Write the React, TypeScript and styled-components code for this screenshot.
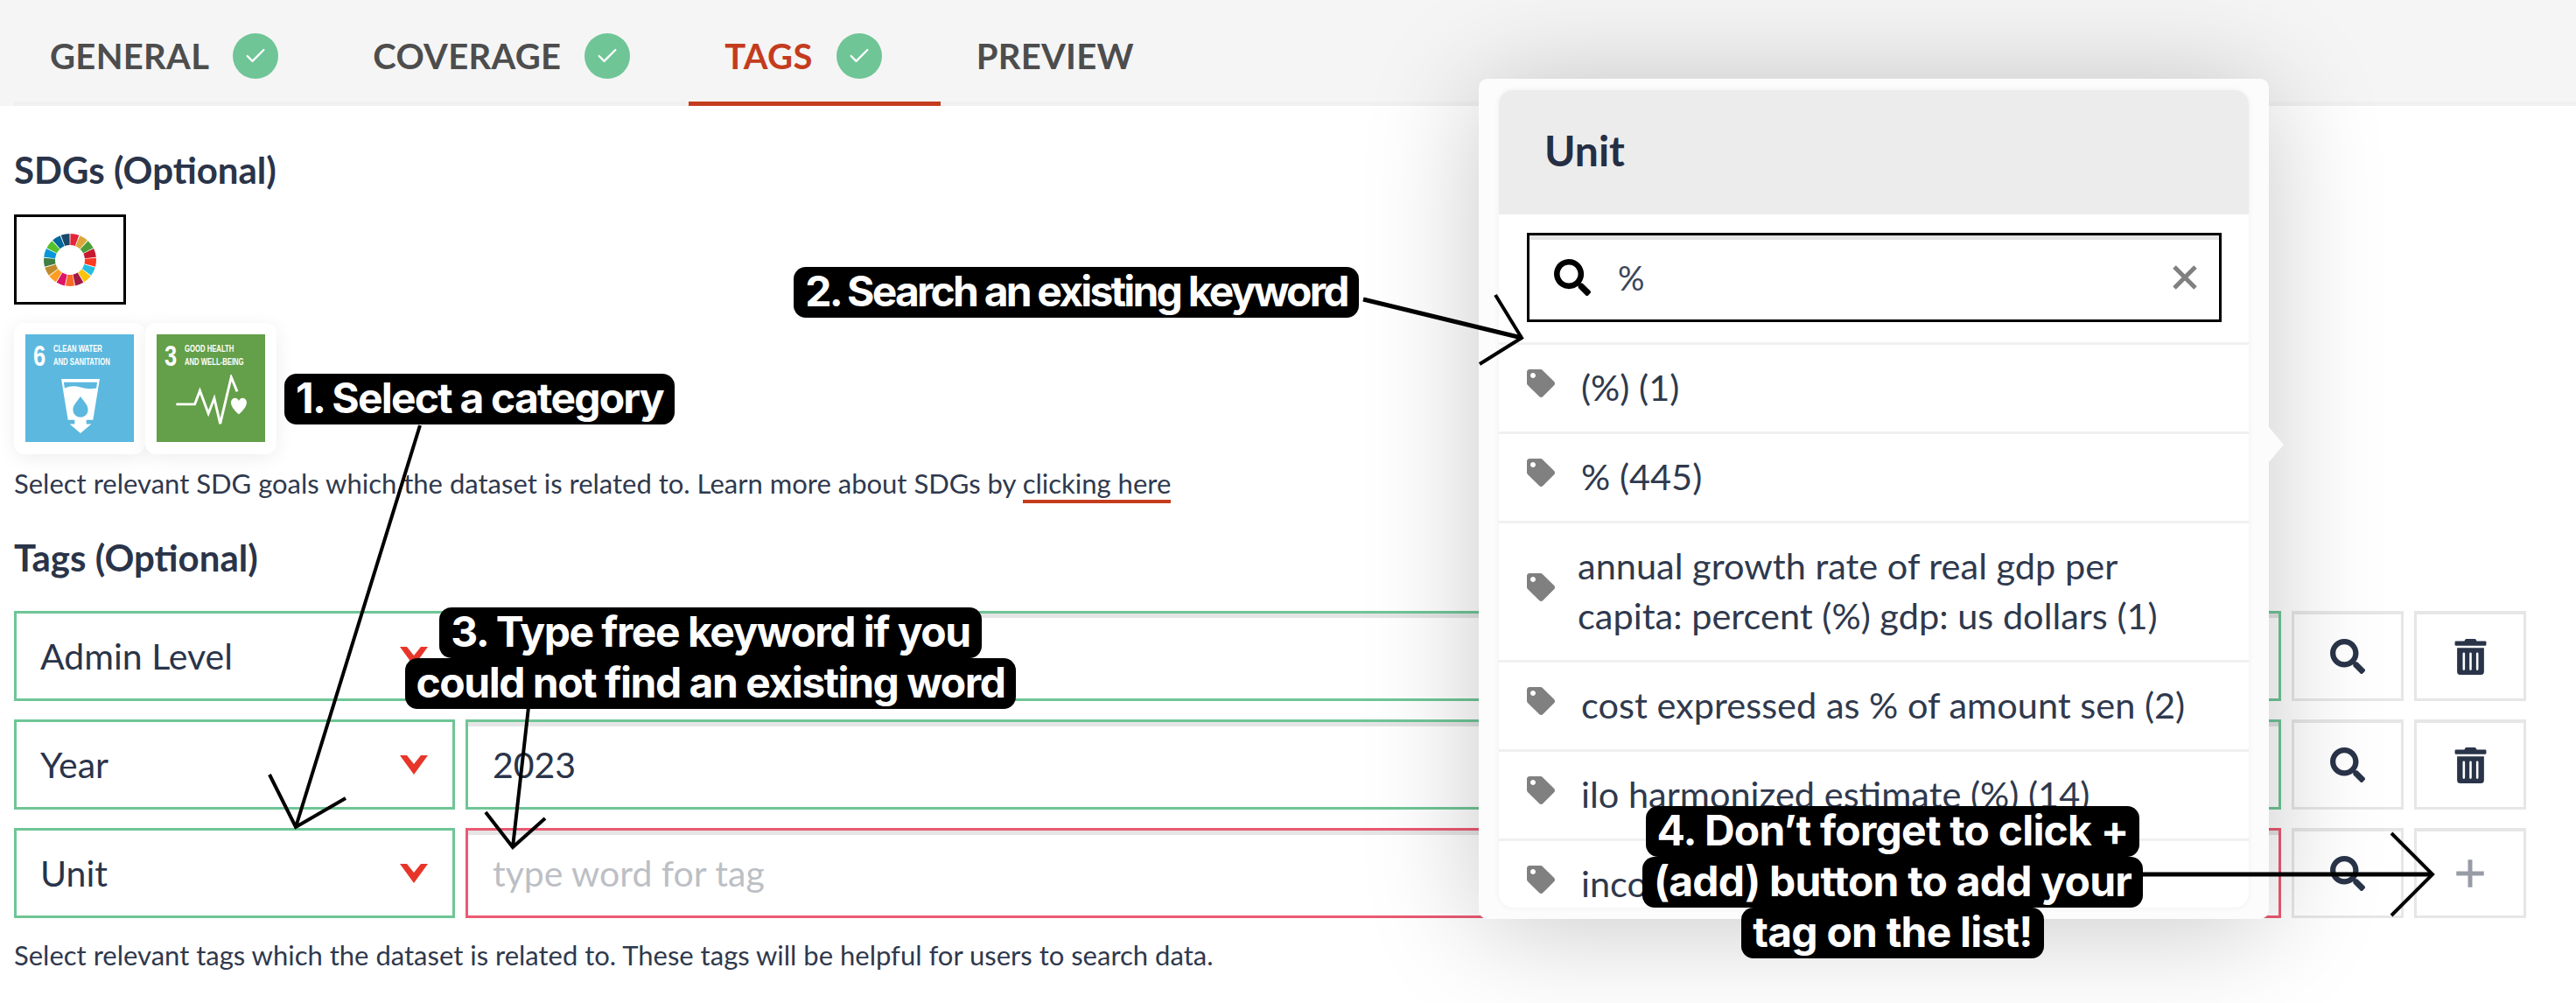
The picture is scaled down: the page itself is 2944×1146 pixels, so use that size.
import styled, { createGlobalStyle } from "styled-components";
import { Fragment } from "react";
import { FaSearch, FaTag, FaTrashAlt } from "react-icons/fa";
import { Check, Plus } from "lucide-react";

const GlobalStyle = createGlobalStyle`
  html, body {
    margin: 0;
    padding: 0;
    background: #fff;
  }
  * {
    box-sizing: border-box;
  }
`;

const Page = styled.div`
  position: relative;
  width: 2944px;
  height: 1146px;
  overflow: hidden;
  background: #fff;
  font-family: Lato, "Noto Sans", sans-serif;
  color: #2a3449;
`;

const TabBar = styled.div`
  height: 121px;
  padding-left: 16px;
  background: #f5f5f5;
  display: flex;
  align-items: flex-end;
`;

const TabList = styled.div`
  flex: 1;
  display: flex;
  border-bottom: 5px solid #f0f0f0;
  height: 121px;
`;

const Tab = styled.div<{ $active?: boolean }>`
  display: flex;
  align-items: center;
  height: 121px;
  padding: 12px 67px 0 41px;
  gap: 27px;
  margin-bottom: -5px;
  border-bottom: 5px solid ${(p) => (p.$active ? "#c43c1e" : "transparent")};
  color: ${(p) => (p.$active ? "#c43c1e" : "#4d4d4d")};
  font-size: 40px;
  font-weight: 700;
  letter-spacing: 0.3px;
`;

const CheckBadge = styled.span`
  width: 52px;
  height: 52px;
  border-radius: 50%;
  background: #6fc596;
  color: #fff;
  display: flex;
  align-items: center;
  justify-content: center;
`;

const Content = styled.div`
  padding-left: 16px;
`;

const SectionTitle = styled.h2<{ $top: number }>`
  margin: ${(p) => p.$top}px 0 0;
  font-size: 42px;
  line-height: 48px;
  font-weight: 700;
  color: #2a3449;
`;

const WheelBox = styled.div`
  margin-top: 27px;
  width: 128px;
  height: 103px;
  border: 3px solid #000;
  display: flex;
  align-items: center;
  justify-content: center;
`;

const GoalRow = styled.div`
  margin-top: 21px;
  display: flex;
`;

const GoalCard = styled.div`
  width: 150px;
  height: 150px;
  padding: 13px;
  border-radius: 12px;
  background: #fff;
  box-shadow: 0 4px 22px rgba(0, 0, 0, 0.07);
`;

const GoalTile = styled.div<{ $bg: string }>`
  width: 124px;
  height: 123px;
  padding: 9px 0 0 9px;
  background: ${(p) => p.$bg};
  color: #fff;
`;

const GoalHead = styled.div`
  display: flex;
  gap: 9px;
  height: 30px;
`;

const GoalNumber = styled.span`
  width: 14px;
  font: 700 34px/30px "Liberation Sans", sans-serif;
  transform: scaleX(0.75);
  transform-origin: left center;
`;

const GoalName = styled.span`
  font: 700 11px/15px "Liberation Sans", sans-serif;
  white-space: pre;
  transform: scaleX(0.7);
  transform-origin: left center;
`;

const GoalIcon = styled.svg<{ $top: number }>`
  display: block;
  margin: ${(p) => p.$top}px auto 0;
  position: relative;
  left: -4px;
`;

const Help = styled.p<{ $top: number }>`
  margin: ${(p) => p.$top}px 0 0;
  font-size: 31px;
  line-height: 40px;
  color: #2f394d;
`;

const HelpLink = styled.span`
  border-bottom: 4px solid #c43c1e;
`;

const TagGrid = styled.div`
  margin-top: 37px;
  width: 2871px;
  display: grid;
  grid-template-columns: 504px 2075px 128px 128px;
  grid-auto-rows: 103px;
  column-gap: 12px;
  row-gap: 21px;
`;

const SelectBox = styled.div`
  display: flex;
  align-items: center;
  justify-content: space-between;
  padding: 0 27px 0 27px;
  border: 3px solid #6fc596;
  font-size: 41px;
`;

const TagInput = styled.div<{ $invalid?: boolean; $placeholder?: boolean }>`
  display: flex;
  align-items: center;
  padding-left: 28px;
  border: 3px solid ${(p) => (p.$invalid ? "#ea5a72" : "#6fc596")};
  box-shadow: inset 0 5px 0 #e5e5e5;
  font-size: 41px;
  color: ${(p) => (p.$placeholder ? "#bcbfc5" : "#2a3449")};
`;

const IconButton = styled.div<{ $muted?: boolean }>`
  display: flex;
  align-items: center;
  justify-content: center;
  border: 3px solid #e6e6e6;
  border-top-width: 4px;
  background: #fff;
  color: ${(p) => (p.$muted ? "#979ba5" : "#2a3449")};
`;

const Popover = styled.div`
  position: absolute;
  left: 1690px;
  top: 90px;
  width: 903px;
  height: 960px;
  padding: 13px 23px;
  border-radius: 10px;
  background: #fcfcfc;
  box-shadow: 0 10px 130px rgba(0, 0, 0, 0.22);

  &::after {
    content: "";
    position: absolute;
    right: -17px;
    top: 398px;
    border-style: solid;
    border-width: 20px 0 20px 17px;
    border-color: transparent transparent transparent #fcfcfc;
  }
`;

const PopoverBody = styled.div`
  height: 934px;
  border-radius: 16px;
  overflow: hidden;
  background: #fff;
  box-shadow: 0 0 6px rgba(0, 0, 0, 0.06);
`;

const PopoverHead = styled.div`
  height: 142px;
  padding: 0 0 6px 52px;
  display: flex;
  align-items: center;
  background: #ececec;
  font-size: 48px;
  font-weight: 700;
  color: #252f44;
`;

const SearchArea = styled.div`
  height: 146px;
  padding: 21px 31px 0 32px;
`;

const SearchBox = styled.div`
  height: 102px;
  display: flex;
  align-items: center;
  padding: 0 24px 0 28px;
  border: 3px solid #000;
  box-shadow: inset 0 5px 0 #e5e5e5;
  font-size: 38px;
  color: #3b4558;
`;

const SearchValue = styled.span`
  flex: 1;
  margin-left: 31px;
`;

const ResultItem = styled.div<{ $height: number; $gap: number }>`
  height: ${(p) => p.$height}px;
  display: flex;
  align-items: center;
  gap: ${(p) => p.$gap}px;
  padding: 0 20px 3px 32px;
  border-top: 3px solid #f0f0f0;
  font-size: 41.5px;
  line-height: 57px;
  color: #2f394d;
  white-space: pre-line;

  svg {
    flex: none;
    margin-top: -8px;
    color: #808080;
  }
`;

const Callout = styled.div<{ $left: number; $top: number; $width: number; $spacing: number }>`
  position: absolute;
  left: ${(p) => p.$left}px;
  top: ${(p) => p.$top}px;
  width: ${(p) => p.$width}px;
  display: flex;
  flex-direction: column;
  align-items: center;
  letter-spacing: ${(p) => p.$spacing}px;
  z-index: 3;
`;

const CalloutLine = styled.span`
  display: block;
  height: 58px;
  padding: 0 13px;
  border-radius: 14px;
  background: #000;
  color: #fff;
  font: 700 48px/56px Inter, "Liberation Sans", sans-serif;
  white-space: nowrap;
`;

const ArrowLayer = styled.svg`
  position: absolute;
  left: 0;
  top: 0;
  z-index: 2;
  pointer-events: none;
`;

const wheelColors = [
  "#e5243b", "#dda63a", "#4c9f38", "#c5192d", "#ff3a21", "#26bde2",
  "#fcc30b", "#a21942", "#fd6925", "#dd1367", "#fd9d24", "#bf8b2e",
  "#3f7e44", "#0a97d9", "#56c02b", "#00689d", "#19486a",
];

function polar(r: number, deg: number) {
  const a = ((deg - 90) * Math.PI) / 180;
  return `${(32 + r * Math.cos(a)).toFixed(2)} ${(32 + r * Math.sin(a)).toFixed(2)}`;
}

function SdgWheel() {
  const step = 360 / wheelColors.length;
  return (
    <svg width="64" height="64" viewBox="0 0 64 64">
      {wheelColors.map((color, i) => {
        const a0 = i * step + 1;
        const a1 = (i + 1) * step - 1;
        return (
          <path
            key={color}
            fill={color}
            d={`M${polar(30, a0)} A30 30 0 0 1 ${polar(30, a1)} L${polar(17, a1)} A17 17 0 0 0 ${polar(17, a0)}Z`}
          />
        );
      })}
    </svg>
  );
}

function Chevron() {
  return (
    <svg width="34" height="24" viewBox="0 0 34 24">
      <path d="M1 1 H9 L17 11 L25 1 H33 L17 23Z" fill="#e8352a" />
    </svg>
  );
}

function ClearIcon() {
  return (
    <svg width="30" height="30" viewBox="0 0 30 30">
      <path d="M3 3 L27 27 M27 3 L3 27" fill="none" stroke="#808080" strokeWidth="5" />
    </svg>
  );
}

const tags = [
  { name: "Admin Level" },
  { name: "Year", value: "2023" },
];

const results = [
  { text: "(%) (1)", height: 102, gap: 30 },
  { text: "% (445)", height: 102, gap: 30 },
  { text: "annual growth rate of real gdp per\ncapita: percent (%) gdp: us dollars (1)", height: 159, gap: 26 },
  { text: "cost expressed as % of amount sen (2)", height: 102, gap: 30 },
  { text: "ilo harmonized estimate (%) (14)", height: 102, gap: 30 },
  { text: "income", height: 102, gap: 30 },
];

export default function App() {
  return (
    <>
      <GlobalStyle />
      <Page>
        <TabBar>
          <TabList>
            <Tab>
              GENERAL
              <CheckBadge><Check size={28} strokeWidth={2} /></CheckBadge>
            </Tab>
            <Tab>
              COVERAGE
              <CheckBadge><Check size={28} strokeWidth={2} /></CheckBadge>
            </Tab>
            <Tab $active>
              TAGS
              <CheckBadge><Check size={28} strokeWidth={2} /></CheckBadge>
            </Tab>
            <Tab>PREVIEW</Tab>
          </TabList>
        </TabBar>

        <Content>
          <SectionTitle $top={49}>SDGs (Optional)</SectionTitle>
          <WheelBox>
            <SdgWheel />
          </WheelBox>
          <GoalRow>
            <GoalCard>
              <GoalTile $bg="#5cb8de">
                <GoalHead>
                  <GoalNumber>6</GoalNumber>
                  <GoalName>{"CLEAN WATER\nAND SANITATION"}</GoalName>
                </GoalHead>
                <GoalIcon $top={11} width="46" height="63" viewBox="0 0 48 66">
                  <path d="M1 1 H47 L39 50 H31 V55 H37 L24 66 L11 55 H17 V50 H9 Z" fill="#fff" />
                  <path d="M5 12 Q14 8 24 11 T43 12 L44 5 H4Z" fill="#5cb8de" />
                  <path d="M24 22 C30 30 33 33 33 38 A9 9 0 0 1 15 38 C15 33 18 30 24 22Z" fill="#5cb8de" />
                </GoalIcon>
              </GoalTile>
            </GoalCard>
            <GoalCard>
              <GoalTile $bg="#649f49">
                <GoalHead>
                  <GoalNumber>3</GoalNumber>
                  <GoalName>{"GOOD HEALTH\nAND WELL-BEING"}</GoalName>
                </GoalHead>
                <GoalIcon $top={7} width="84" height="60" viewBox="0 0 86 62">
                  <path d="M1 35 H23 L29 19 L39 46 L46 28 L53 58 L66 3 L73 20" fill="none" stroke="#fff" strokeWidth="3" />
                  <path d="M75 47 C64 38 64 30 69 28 C72 27 74 29 75 31 C76 29 78 27 81 28 C86 30 86 38 75 47Z" fill="#fff" />
                </GoalIcon>
              </GoalTile>
            </GoalCard>
          </GoalRow>
          <Help $top={13}>
            Select relevant SDG goals which the dataset is related to. Learn more about SDGs by{" "}
            <HelpLink>clicking here</HelpLink>
          </Help>

          <SectionTitle $top={41}>Tags (Optional)</SectionTitle>
          <TagGrid>
            {tags.map((tag) => (
              <Fragment key={tag.name}>
                <SelectBox>
                  {tag.name}
                  <Chevron />
                </SelectBox>
                <TagInput>{tag.value}</TagInput>
                <IconButton><FaSearch size={40} /></IconButton>
                <IconButton><FaTrashAlt size={41} /></IconButton>
              </Fragment>
            ))}
            <SelectBox>
              Unit
              <Chevron />
            </SelectBox>
            <TagInput $invalid $placeholder>type word for tag</TagInput>
            <IconButton><FaSearch size={40} /></IconButton>
            <IconButton $muted><Plus size={54} strokeWidth={2.2} strokeLinecap="butt" /></IconButton>
          </TagGrid>
          <Help $top={22}>
            Select relevant tags which the dataset is related to. These tags will be helpful for users to search data.
          </Help>
        </Content>

        <Popover>
          <PopoverBody>
            <PopoverHead>Unit</PopoverHead>
            <SearchArea>
              <SearchBox>
                <FaSearch size={42} color="#000" />
                <SearchValue>%</SearchValue>
                <ClearIcon />
              </SearchBox>
            </SearchArea>
            {results.map((item) => (
              <ResultItem key={item.text} $height={item.height} $gap={item.gap}>
                <FaTag size={32} />
                <span>{item.text}</span>
              </ResultItem>
            ))}
          </PopoverBody>
        </Popover>

        <ArrowLayer width="2944" height="1146" viewBox="0 0 2944 1146">
          <g fill="none" stroke="#000" strokeWidth="4">
            <path d="M480 486 L338 945 M308 885 L338 945 L395 912" />
            <path d="M1709 337 L1739 386 L1691 416" />
            <path d="M604 808 L586 968 M555 928 L586 968 L623 935" />
            <path d="M2733 952 L2780 999 L2733 1046" />
          </g>
          <path d="M1558 342 L1739 386 M2447 999 H2780" fill="none" stroke="#000" strokeWidth="5" />
        </ArrowLayer>

        <Callout $left={322} $top={427} $width={452} $spacing={-1.8}>
          <CalloutLine>1. Select a category</CalloutLine>
        </Callout>
        <Callout $left={902} $top={305} $width={656} $spacing={-2.8}>
          <CalloutLine>2. Search an existing keyword</CalloutLine>
        </Callout>
        <Callout $left={459} $top={694} $width={706} $spacing={-1.5}>
          <CalloutLine>3. Type free keyword if you</CalloutLine>
          <CalloutLine>could not find an existing word</CalloutLine>
        </Callout>
        <Callout $left={1879} $top={921} $width={568} $spacing={-0.8}>
          <CalloutLine>4. Don’t forget to click +</CalloutLine>
          <CalloutLine>(add) button to add your</CalloutLine>
          <CalloutLine>tag on the list!</CalloutLine>
        </Callout>
      </Page>
    </>
  );
}
